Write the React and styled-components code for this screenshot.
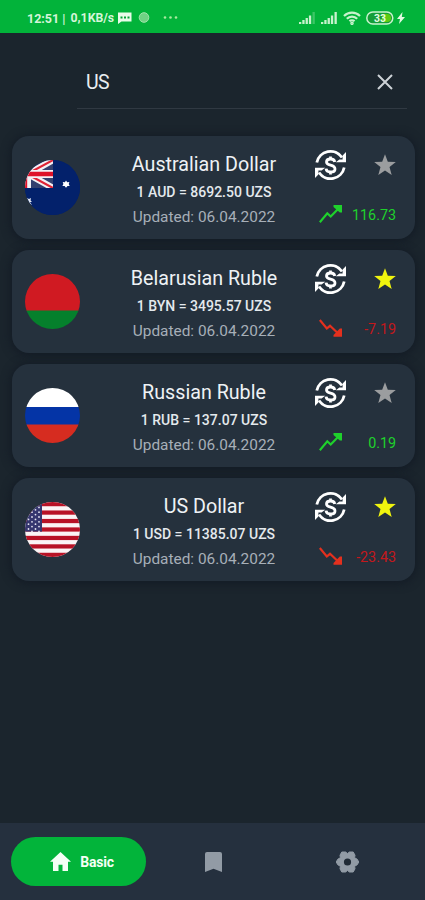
import React from 'react'
import styled, { createGlobalStyle } from 'styled-components'

const GlobalStyle = createGlobalStyle`
  * {
    box-sizing: border-box;
  }
  body {
    margin: 0;
    background: #1b252d;
    font-family: Roboto, 'Liberation Sans', sans-serif;
  }
  svg {
    display: block;
    flex: none;
  }
`

const Screen = styled.div`
  display: flex;
  flex-direction: column;
  height: 900px;
  overflow: hidden;
  background: #1b252d;
`

const StatusBar = styled.div`
  display: flex;
  justify-content: space-between;
  align-items: center;
  flex: none;
  height: 33px;
  padding: 3px 20px 0 27px;
  background: #02b33a;
  color: #d5f5d8;
`

const StatusGroup = styled.div`
  display: flex;
  align-items: center;
  gap: ${(props) => props.$gap || '0'};
`

const StatusText = styled.span`
  width: ${(props) => props.$width};
  font-size: ${(props) => props.$size};
  font-weight: 700;
  white-space: nowrap;
`

const Search = styled.div`
  display: flex;
  justify-content: space-between;
  align-items: center;
  flex: none;
  height: 54px;
  margin: 22px 18px 0 77px;
  padding: 0 13px 0 9px;
  border-bottom: 1px solid #303942;
`

const Query = styled.div`
  padding-top: 2px;
  font-size: 19.5px;
  letter-spacing: -0.6px;
  line-height: 24px;
  color: #e9edf0;
`

const List = styled.div`
  display: flex;
  flex-direction: column;
  flex: 1;
  gap: 11px;
  padding: 27px 10px 0 12px;
`

const Card = styled.div`
  display: flex;
  height: 103px;
  padding: 13px 19px 0 13px;
  border-radius: 17px;
  background: #25313d;
  box-shadow: 0 1px 9px 2px #141c26;
`

const Flag = styled.svg`
  width: 55px;
  height: 55px;
  margin-top: 11px;
  border-radius: 50%;
`

const Info = styled.div`
  flex: 1;
  margin-left: 13px;
  padding-top: 1px;
  text-align: center;
  white-space: nowrap;
`

const Name = styled.div`
  font-size: 19.7px;
  line-height: 30px;
  color: #eef2f5;
`

const Rate = styled.div`
  font-size: 14px;
  font-weight: 500;
  line-height: 24px;
  color: #e4e9ed;
`

const Updated = styled.div`
  font-size: 15.4px;
  line-height: 26px;
  color: #a7afb8;
`

const Side = styled.div`
  display: flex;
  flex-direction: column;
  gap: 24px;
  width: 81px;
`

const Actions = styled.div`
  display: flex;
  justify-content: space-between;
  align-items: center;
  height: 32px;
`

const Change = styled.div`
  display: flex;
  justify-content: space-between;
  align-items: center;
  height: 20px;
  padding-left: 4px;
  font-size: 14.3px;
  color: ${(props) => (props.$up ? '#1fd12c' : '#c3181c')};
`

const BottomNav = styled.div`
  display: grid;
  grid-template-columns: 135px 134px 135px;
  align-items: center;
  flex: none;
  height: 77px;
  padding-left: 11px;
  background: #25303e;
`

const NavItem = styled.div`
  display: flex;
  justify-content: center;
  align-items: center;
  gap: 9px;
  height: 49px;
  border-radius: 25px;
  padding-left: ${(props) => (props.$active ? '7px' : '0')};
  background: ${(props) => (props.$active ? '#02b43a' : 'transparent')};
  color: ${(props) => (props.$active ? '#f4fff5' : '#929ba5')};
`

const NavLabel = styled.span`
  font-size: 14px;
  font-weight: 700;
  letter-spacing: -0.2px;
`

const usStripes = [0, 1, 2, 3, 4, 5, 6]
const usStars = [0, 1, 2, 3, 4, 5]

const AustraliaFlag = () => (
  <Flag viewBox='0 0 55 55'>
    <rect width='55' height='55' fill='#03216b' />
    <path d='M0 0h28v28H0z' fill='#33406f' />
    <path d='M-22 0L28 28M-22 28L28 0' stroke='#f3f1f5' strokeWidth='6.500' />
    <path d='M4 15L28 28M4 13L28 0' stroke='#df2436' strokeWidth='2' />
    <path d='M0 14h28M2 0v28' stroke='#f3f1f5' strokeWidth='8' />
    <path d='M0 14h28M0 0v28' stroke='#df1229' strokeWidth='4.4' />
    <path d='M28 0h27v55H0V28h28z' fill='#03216b' />
    <path
      d='M41 20.500l1.200 1.700 2.200-.2-.7 2 1 1.900-2.200.2-1.500 1.600-1.400-1.600-2.200-.2 1-1.900-.7-2 2.200.2z'
      fill='#fff'
    />
    <path d='M2 38l2 1 2-1-.5 2.500 1.500 1-2 .7L7 45l-3-1.500L2.500 41z' fill='#e8ecf5' />
  </Flag>
)

const BelarusFlag = () => (
  <Flag viewBox='0 0 55 55'>
    <rect width='55' height='37' fill='#d01a22' />
    <rect y='36.500' width='55' height='18.500' fill='#05802c' />
  </Flag>
)

const RussiaFlag = () => (
  <Flag viewBox='0 0 55 55'>
    <rect width='55' height='19' fill='#fff' />
    <rect y='19' width='55' height='18' fill='#0434a6' />
    <rect y='36.500' width='55' height='18.500' fill='#d62c20' />
  </Flag>
)

const UsaFlag = () => (
  <Flag viewBox='0 0 55 55'>
    <rect width='55' height='55' fill='#fbf4f5' />
    {usStripes.map((i) => (
      <rect key={i} y={i * 8.46} width='55' height='4.230' fill='#b81226' />
    ))}
    <rect width='17' height='29.600' fill='#35366f' />
    {usStars.map((i) => (
      <g key={i} fill='#e3e2f0'>
        <circle cx='3.500' cy={3 + i * 4.8} r='0.900' />
        <circle cx='10.500' cy={3 + i * 4.8} r='0.900' />
        <circle cx='7' cy={5.4 + i * 4.8} r='0.900' />
        <circle cx='14' cy={5.4 + i * 4.8} r='0.900' />
      </g>
    ))}
  </Flag>
)

const ExchangeIcon = () => (
  <svg width='31' height='32' viewBox='0 0 31 32' fill='none' stroke='#fff'>
    <path d='M1.800 13.500A13.900 13.900 0 0 1 27 8.500M29.200 18.500A13.900 13.900 0 0 1 4 23.500' strokeWidth='2.800' />
    <path d='M31 3v10.200H20.800l3.600-2.700h3.200V6.500zM0 29V18.800h10.200l-3.600 2.700H3.400v4z' fill='#fff' stroke='none' />
    <path d='M19.800 13C19.400 10.900 18 10 15.600 10c-2.500 0-4.100 1.100-4.100 2.900 0 2 1.700 2.600 4 3.200 2.700.7 4.500 1.500 4.500 3.800 0 2-1.800 3.100-4.400 3.100-2.600 0-4.300-1.100-4.600-3.400M15.500 7.500v2.500M15.500 23v2.500' strokeWidth='2.800' />
  </svg>
)

const StarIcon = ({ active }) => (
  <svg width='22' height='22' viewBox='0 0 22 22'>
    <path
      d='M11 .3l2.800 7.500 8 .3-6.300 5 2.200 7.900L11 16.500 4.300 21l2.200-7.900-6.300-5 8-.3z'
      fill={active ? '#f0f40e' : '#9b9d9f'}
    />
  </svg>
)

const TrendIcon = ({ up }) =>
  up ? (
    <svg width='24' height='20' viewBox='0 0 24 20'>
      <path d='M.8 17.200L8.300 8.300l3.400 3.200L20.500 2.500' fill='none' stroke='#1fd12c' strokeWidth='2.200' />
      <path d='M14.500 0H23v7.500h-2.200L14.500 2z' fill='#1fd12c' />
    </svg>
  ) : (
    <svg width='24' height='20' viewBox='0 0 24 20'>
      <path d='M.8 1L7.800 9.500l3.200-2.700 9.500 9' fill='none' stroke='#e4301e' strokeWidth='2.200' />
      <path d='M23 9.500v8.300h-8.500V16l6.300-6.500z' fill='#e4301e' />
    </svg>
  )

const SignalIcon = ({ weak }) => (
  <svg width='17' height='12' viewBox='0 0 17 12' fill='#c8f2cd'>
    <path d='M0 10h2.300v2H0zM3.300 8h2.300v4H3.300zM6.600 6h2.300v6H6.600zM9.900 3.500h2.300V12H9.900z' />
    <path d='M13.500 0h2.300v12h-2.300z' opacity={weak ? 0.3 : 1} />
  </svg>
)

const rates = [
  { name: 'Australian Dollar', rate: '1 AUD = 8692.50 UZS', change: '116.73', up: true, fav: false, flag: AustraliaFlag },
  { name: 'Belarusian Ruble', rate: '1 BYN = 3495.57 UZS', change: '-7.19', up: false, fav: true, flag: BelarusFlag },
  { name: 'Russian Ruble', rate: '1 RUB = 137.07 UZS', change: '0.19', up: true, fav: false, flag: RussiaFlag },
  { name: 'US Dollar', rate: '1 USD = 11385.07 UZS', change: '-23.43', up: false, fav: true, flag: UsaFlag },
]

const RateCard = ({ item }) => {
  const CountryFlag = item.flag
  return (
    <Card>
      <CountryFlag />
      <Info>
        <Name>{item.name}</Name>
        <Rate>{item.rate}</Rate>
        <Updated>Updated: 06.04.2022</Updated>
      </Info>
      <Side>
        <Actions>
          <ExchangeIcon />
          <StarIcon active={item.fav} />
        </Actions>
        <Change $up={item.up}>
          <TrendIcon up={item.up} />
          <span>{item.change}</span>
        </Change>
      </Side>
    </Card>
  )
}

const Status = () => (
  <StatusBar>
    <StatusGroup>
      <StatusText $width='43.5px' $size='12.5px'>12:51 |</StatusText>
      <StatusText $width='47.5px' $size='12.3px'>0,1KB/s</StatusText>
      <svg width='60' height='12' viewBox='0 0 60 12'>
        <path d='M0 .5h13.500v9H3.500L0 12z' fill='#e9fbe9' />
        <path d='M2.500 4.500h2v2h-2zM6 4.500h2v2H6zM9.500 4.500h2v2h-2z' fill='#02a335' />
        <circle cx='26' cy='5.500' r='4.800' fill='#70d284' stroke='#a0e4aa' />
        <circle cx='47' cy='5.500' r='1.300' fill='#a9ea9e' />
        <circle cx='52.500' cy='5.500' r='1.300' fill='#a9ea9e' />
        <circle cx='58' cy='5.500' r='1.300' fill='#a9ea9e' />
      </svg>
    </StatusGroup>
    <StatusGroup $gap='3px'>
      <StatusGroup $gap='5px'>
        <SignalIcon weak />
        <SignalIcon />
        <svg width='18' height='14' viewBox='0 0 18 14' fill='none' stroke='#c8f2cd' strokeWidth='2.200'>
          <path d='M1 5a11.300 11.300 0 0 1 16 0M3.800 7.800a7.300 7.300 0 0 1 10.400 0M6.500 10.300a3.500 3.500 0 0 1 5 0' />
          <circle cx='9' cy='12.300' r='.7' />
        </svg>
        <svg width='28' height='14' viewBox='0 0 28 14'>
          <rect x='.8' y='1' width='26' height='12' rx='6' fill='#159e38' stroke='#c8f2cd' strokeWidth='1.500' />
          <path d='M16 3h5a4 4 0 0 1 0 8h-5z' fill='#5ccc12' />
          <text x='8' y='11' fontSize='10.500' fontWeight='700' fill='#e2fae3'>33</text>
        </svg>
      </StatusGroup>
      <svg width='8' height='12' viewBox='0 0 8 12'>
        <path d='M5.500 0L0 7h3L2 12l6-7H4.800z' fill='#e2fae3' />
      </svg>
    </StatusGroup>
  </StatusBar>
)

const App = () => (
  <>
    <GlobalStyle />
    <Screen>
      <Status />
      <Search>
        <Query>US</Query>
        <svg width='18' height='18' viewBox='0 0 18 18'>
          <path d='M2 2l14 14M16 2L2 16' stroke='#cdd2d6' strokeWidth='2' />
        </svg>
      </Search>
      <List>
        {rates.map((item) => (
          <RateCard key={item.name} item={item} />
        ))}
      </List>
      <BottomNav>
        <NavItem $active>
          <svg width='21' height='19' viewBox='0 0 21 19'>
            <path d='M10.500 0L21 9.700h-3V19h-5.500v-6.200h-4V19H3V9.700H0z' fill='currentColor' />
          </svg>
          <NavLabel>Basic</NavLabel>
        </NavItem>
        <NavItem>
          <svg width='17' height='20' viewBox='0 0 17 20'>
            <path d='M2 0h13a2 2 0 0 1 2 2v18l-8.500-3.200L0 20V2a2 2 0 0 1 2-2z' fill='currentColor' />
          </svg>
        </NavItem>
        <NavItem>
          <svg width='23' height='22' viewBox='0 0 23 22'>
            <path
              d='M5.800 1h3.800l1.900 1.500L13.400 1h3.800l1.800 3.200-.4 2.500 2.700 1.600L22.700 11l-1.400 2.700-2.700 1.600.4 2.500-1.800 3.200h-3.800l-1.900-1.500L9.600 21H5.800L4 17.800l.4-2.500-2.700-1.600L.3 11l1.400-2.700 2.700-1.600L4 4.200z'
              fill='currentColor'
              stroke='currentColor'
              strokeLinejoin='round'
            />
            <circle cx='11.500' cy='11' r='3.600' fill='#202a35' />
          </svg>
        </NavItem>
      </BottomNav>
    </Screen>
  </>
)

export default App
